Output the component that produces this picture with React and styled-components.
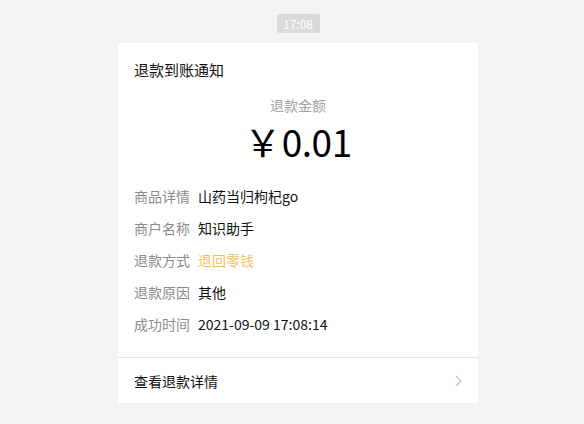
import React from 'react'
import styled, { createGlobalStyle } from 'styled-components'

const GlobalStyle = createGlobalStyle`
body {
  margin: 0;
  background-color: #f3f3f3;
  font-family: "Noto Sans CJK SC", "Liberation Sans", sans-serif;
}
`

const rows = [
  { label: '商品详情', value: '山药当归枸杞go' },
  { label: '商户名称', value: '知识助手' },
  { label: '退款方式', value: '退回零钱', accent: true },
  { label: '退款原因', value: '其他' },
  { label: '成功时间', value: '2021-09-09 17:08:14' },
]

const App = () => {
  return (
    <Page>
      <GlobalStyle />
      <TimeBadge>17:08</TimeBadge>
      <Card>
        <Title>退款到账通知</Title>
        <AmountLabel>退款金额</AmountLabel>
        <Amount>
          <Yen>￥</Yen>0.01
        </Amount>
        <Details>
          {rows.map((r) => (
            <Row key={r.label}>
              <Label>{r.label}</Label>
              <Value $accent={r.accent}>{r.value}</Value>
            </Row>
          ))}
        </Details>
        <Footer>
          <FooterText>查看退款详情</FooterText>
          <Chevron width="7" height="12" viewBox="0 0 7 12">
            <polyline points="1,1 6,6 1,11" fill="none" stroke="#c2c2c2" strokeWidth="1.4" />
          </Chevron>
        </Footer>
      </Card>
    </Page>
  )
}

export default App

const Page = styled.div`
width: 584px;
height: 424px;
box-sizing: border-box;
padding: 14px 0 0 12px;
display: flex;
flex-direction: column;
align-items: center;
`
const TimeBadge = styled.div`
width: 43px;
height: 19px;
border-radius: 2px;
background-color: #dadada;
color: #fff;
font-size: 12px;
line-height: 19px;
text-align: center;
`
const Card = styled.div`
margin-top: 10px;
width: 360px;
background-color: #fff;
border-radius: 3px;
display: flex;
flex-direction: column;
`
const Title = styled.div`
padding: 16px 16px 0;
font-size: 15px;
line-height: 22px;
color: #111;
`
const AmountLabel = styled.div`
margin-top: 14px;
text-align: center;
font-size: 14px;
line-height: 20px;
color: #a3a3a3;
`
const Amount = styled.div`
margin-top: 4px;
text-align: center;
font-size: 37px;
line-height: 44px;
color: #000;
letter-spacing: -0.5px;
`
const Yen = styled.span`
margin-right: 1px;
`
const Details = styled.div`
margin-top: 17px;
padding: 0 16px 17px;
border-bottom: 1px solid #e6e6e6;
display: flex;
flex-direction: column;
`
const Row = styled.div`
display: flex;
align-items: center;
height: 32px;
font-size: 14px;
`
const Label = styled.div`
width: 64px;
color: #8c8c8c;
`
const Value = styled.div`
color: ${(p) => (p.$accent ? '#fcbf5b' : '#111')};
`
const Footer = styled.div`
height: 45px;
padding: 0 16px;
display: flex;
align-items: center;
justify-content: space-between;
`
const FooterText = styled.div`
font-size: 14px;
color: #111;
`
const Chevron = styled.svg`
display: block;
`
